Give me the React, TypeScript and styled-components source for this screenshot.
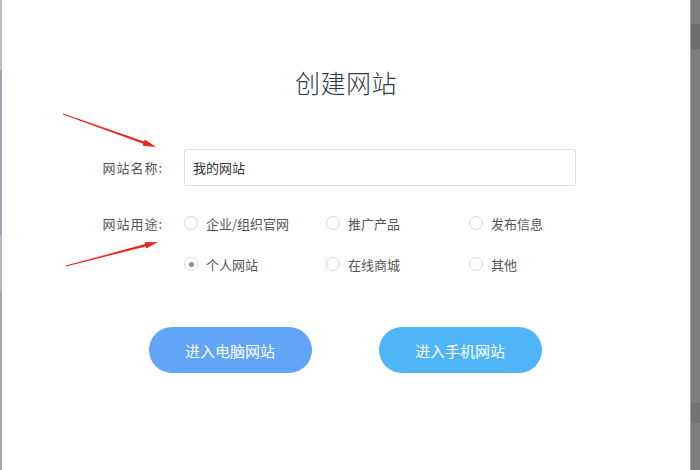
import React from "react";
import styled, { createGlobalStyle } from "styled-components";

const Global = createGlobalStyle`
  html, body { margin: 0; padding: 0; background: #fff; }
  body { font-family: "Noto Sans CJK SC", "Noto Sans", "Liberation Sans", sans-serif; }
  * { box-sizing: border-box; }
`;

const Screen = styled.div`
  position: relative;
  width: 700px;
  height: 470px;
  display: flex;
  overflow: hidden;
  background: #fff;
`;

const LeftEdge = styled.div`
  width: 2px;
  flex: none;
  display: flex;
  flex-direction: column;
`;

const EdgePart = styled.div<{ $h: string; $c: string }>`
  height: ${(p) => p.$h};
  flex: ${(p) => (p.$h === "auto" ? 1 : "none")};
  background: ${(p) => p.$c};
`;

const Main = styled.main`
  flex: 1;
  min-width: 0;
  display: flex;
  flex-direction: column;
  align-items: center;
  padding-top: 66px;
`;

const Title = styled.h1`
  margin: 0;
  font-size: 25px;
  line-height: 32px;
  font-weight: 300;
  color: #2f3a45;
  letter-spacing: 0.5px;
`;

const Form = styled.div`
  margin-top: 51px;
  margin-right: 33px;
  display: grid;
  grid-template-columns: 80px 392px;
  column-gap: 21px;
  row-gap: 28px;
  align-items: start;
`;

const Label = styled.div<{ $h: number }>`
  text-align: right;
  font-size: 13px;
  letter-spacing: 1px;
  color: #555;
  line-height: ${(p) => p.$h}px;
  height: ${(p) => p.$h}px;
`;

const TextInput = styled.div`
  height: 37px;
  border: 1px solid #dedede;
  border-radius: 2px;
  padding-left: 8px;
  display: flex;
  align-items: center;
  font-size: 13px;
  color: #333;
`;

const RadioGrid = styled.div`
  display: grid;
  grid-template-columns: 142px 143px 107px;
  row-gap: 21px;
  margin-top: -1px;
`;

const RadioItem = styled.label`
  display: flex;
  align-items: center;
  gap: 8px;
  height: 20px;
  font-size: 13px;
  color: #555;
`;

const Circle = styled.span<{ $checked?: boolean }>`
  width: 14px;
  height: 14px;
  border-radius: 50%;
  border: 1px solid #d8d8d8;
  display: flex;
  align-items: center;
  justify-content: center;
  flex: none;
  &::after {
    content: "";
    width: 5px;
    height: 5px;
    border-radius: 50%;
    background: ${(p) => (p.$checked ? "#8a8a8a" : "transparent")};
  }
`;

const Buttons = styled.div`
  margin-top: 53px;
  margin-right: 2px;
  display: flex;
  gap: 67px;
`;

const Pill = styled.button<{ $bg: string }>`
  width: 163px;
  height: 46px;
  border: none;
  border-radius: 23px;
  background: ${(p) => p.$bg};
  color: #fff;
  font-family: inherit;
  font-size: 15px;
  cursor: pointer;
`;

const Scrollbar = styled.div`
  width: 10px;
  flex: none;
  align-self: stretch;
  display: flex;
  flex-direction: column;
  border-left: 1px solid rgb(160, 160, 160);
  background-color: rgb(126, 126, 126);
`;

const Overlay = styled.svg`
  position: absolute;
  left: 0;
  top: 0;
  width: 700px;
  height: 470px;
  pointer-events: none;
`;

const options = [
  { label: "企业/组织官网" },
  { label: "推广产品" },
  { label: "发布信息" },
  { label: "个人网站", checked: true },
  { label: "在线商城" },
  { label: "其他" },
];

function Arrow({ x1, y1, x2, y2 }: { x1: number; y1: number; x2: number; y2: number }) {
  const dx = x2 - x1;
  const dy = y2 - y1;
  const len = Math.hypot(dx, dy);
  const ux = dx / len;
  const uy = dy / len;
  const nx = -uy;
  const ny = ux;
  const headLen = 13;
  const bx = x2 - ux * headLen;
  const by = y2 - uy * headLen;
  const pts = [
    [x1 + nx * 0.4, y1 + ny * 0.4],
    [bx + nx * 1.2, by + ny * 1.2],
    [bx + nx * 3.2, by + ny * 3.2],
    [x2, y2],
    [bx - nx * 3.2, by - ny * 3.2],
    [bx - nx * 1.2, by - ny * 1.2],
    [x1 - nx * 0.4, y1 - ny * 0.4],
  ]
    .map((p) => p.map((v) => v.toFixed(1)).join(","))
    .join(" ");
  return <polygon points={pts} fill="#e5271d" />;
}

export default function App() {
  return (
    <Screen>
      <Global />
      <LeftEdge>
        <EdgePart $h="70px" $c="#bcbcbc" />
        <EdgePart $h="165px" $c="#98a5b2" />
        <EdgePart $h="55px" $c="#b8b8b8" />
        <EdgePart $h="auto" $c="#9ca8b4" />
      </LeftEdge>
      <Main>
        <Title>创建网站</Title>
        <Form>
          <Label $h={37}>网站名称:</Label>
          <TextInput>我的网站</TextInput>
          <Label $h={20}>网站用途:</Label>
          <RadioGrid>
            {options.map((o) => (
              <RadioItem key={o.label}>
                <Circle $checked={o.checked} />
                {o.label}
              </RadioItem>
            ))}
          </RadioGrid>
        </Form>
        <Buttons>
          <Pill $bg="#62a4f8">进入电脑网站</Pill>
          <Pill $bg="#4fb4f8">进入手机网站</Pill>
        </Buttons>
      </Main>
      <Scrollbar>
        <EdgePart $h="24px" $c="rgb(126,126,126)" />
        <EdgePart $h="25px" $c="rgb(110,110,110)" />
        <EdgePart $h="354px" $c="rgb(126,126,126)" />
        <EdgePart $h="20px" $c="rgb(114,114,114)" />
        <EdgePart $h="auto" $c="rgb(126,126,126)" />
      </Scrollbar>
      <Overlay viewBox="0 0 700 470">
        <Arrow x1={63} y1={114} x2={156} y2={147} />
        <Arrow x1={66} y1={266} x2={158} y2={242} />
      </Overlay>
    </Screen>
  );
}
